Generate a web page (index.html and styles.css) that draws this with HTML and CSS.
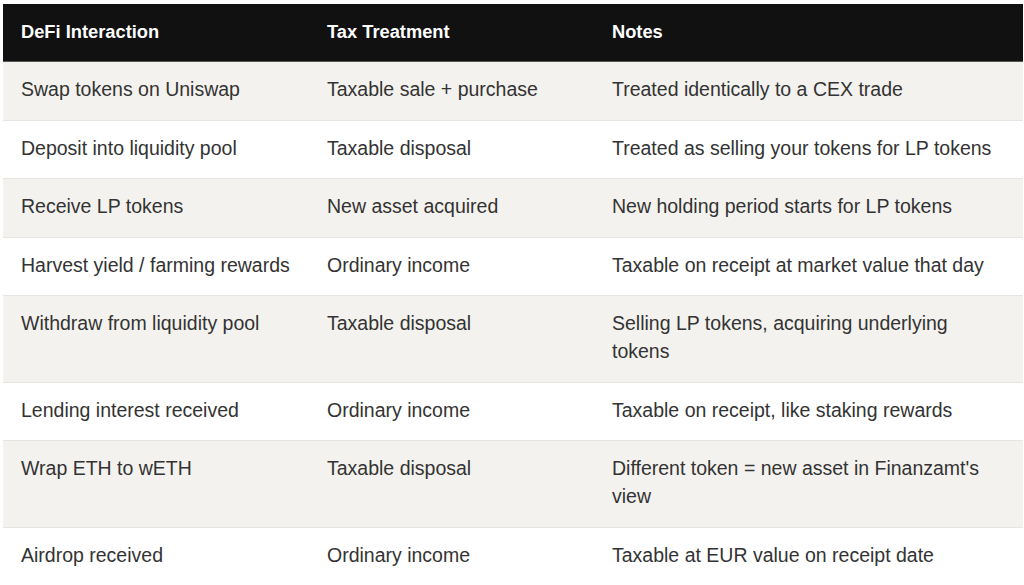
FILE: index.html
```html
<!DOCTYPE html>
<html lang="en">
<head>
<meta charset="utf-8">
<title>DeFi Tax Treatment</title>
<link rel="stylesheet" href="styles.css">
</head>
<body>
<table class="tax-table">
  <colgroup>
    <col class="col-a">
    <col class="col-b">
    <col class="col-c">
  </colgroup>
  <thead>
    <tr>
      <th>DeFi Interaction</th>
      <th>Tax Treatment</th>
      <th>Notes</th>
    </tr>
  </thead>
  <tbody>
    <tr><td>Swap tokens on Uniswap</td><td>Taxable sale + purchase</td><td>Treated identically to a CEX trade</td></tr>
    <tr><td>Deposit into liquidity pool</td><td>Taxable disposal</td><td>Treated as selling your tokens for LP tokens</td></tr>
    <tr><td>Receive LP tokens</td><td>New asset acquired</td><td>New holding period starts for LP tokens</td></tr>
    <tr><td>Harvest yield / farming rewards</td><td>Ordinary income</td><td>Taxable on receipt at market value that day</td></tr>
    <tr><td>Withdraw from liquidity pool</td><td>Taxable disposal</td><td>Selling LP tokens, acquiring underlying tokens</td></tr>
    <tr><td>Lending interest received</td><td>Ordinary income</td><td>Taxable on receipt, like staking rewards</td></tr>
    <tr><td>Wrap ETH to wETH</td><td>Taxable disposal</td><td>Different token = new asset in Finanzamt's view</td></tr>
    <tr><td>Airdrop received</td><td>Ordinary income</td><td>Taxable at EUR value on receipt date</td></tr>
  </tbody>
</table>
</body>
</html>
```
FILE: styles.css
```css
html, body {
  margin: 0;
  padding: 0;
  background: #ffffff;
}
body {
  padding: 4px 0 0 3px;
  font-family: "Liberation Sans", Arial, sans-serif;
  color: #333333;
}
.tax-table {
  width: 1020px;
  border-collapse: collapse;
  table-layout: fixed;
  font-size: 19.5px;
  line-height: 28px;
}
.col-a { width: 306px; }
.col-b { width: 285px; }
.col-c { width: 429px; }
.tax-table th {
  background: #111111;
  color: #ffffff;
  font-weight: bold;
  font-size: 18.3px;
  text-align: left;
  vertical-align: top;
  padding: 14px 18px 15px 18px;
  height: 28px;
  border-bottom: 1px solid #555555;
}
.tax-table td {
  vertical-align: top;
  padding: 13px 18px 16.5px 18px;
  border-bottom: 1px solid #e8e5e0;
}
.tax-table tbody tr:nth-child(odd) td {
  background: #f4f2ef;
}
```
